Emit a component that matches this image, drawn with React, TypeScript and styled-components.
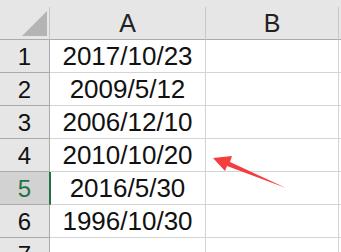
import React from 'react';
import styled, { createGlobalStyle } from 'styled-components';

const GlobalStyle = createGlobalStyle`
  html, body {
    margin: 0;
    padding: 0;
    background: #ffffff;
    overflow: hidden;
  }
  body {
    font-family: "Liberation Sans", Arial, sans-serif;
  }
`;

const Sheet = styled.div`
  position: relative;
  width: 341px;
  height: 252px;
  overflow: hidden;
  background: #ffffff;
`;

const TopStrip = styled.div`
  height: 7px;
  background: #e6e6e6;
`;

const Grid = styled.div`
  display: grid;
  grid-template-columns: 50px 156px 133px 2px;
  grid-auto-rows: 33px;
`;

const Corner = styled.div`
  position: relative;
  background: #e6e6e6;
  border-right: 1px solid #c8c8c8;
  border-bottom: 1px solid #ababab;
`;

const CornerTriangle = styled.div`
  position: absolute;
  right: 2px;
  bottom: 3px;
  width: 0;
  height: 0;
  border-left: 25px solid transparent;
  border-bottom: 25px solid #b4b4b4;
`;

const ColHeader = styled.div<{ last?: boolean }>`
  background: #e6e6e6;
  border-right: ${p => (p.last ? 'none' : '1px solid #c8c8c8')};
  border-bottom: 1px solid #ababab;
  display: flex;
  align-items: center;
  justify-content: center;
  font-size: 25px;
  color: #222222;
  padding-top: 1px;
  box-sizing: border-box;
`;

const RowHeader = styled.div<{ selected?: boolean }>`
  background: ${p => (p.selected ? '#d2d2d2' : '#e6e6e6')};
  border-right: ${p => (p.selected ? '2px solid #217346' : '1px solid #ababab')};
  border-bottom: 1px solid #ababab;
  margin-right: ${p => (p.selected ? '-1px' : '0')};
  display: flex;
  align-items: center;
  justify-content: center;
  font-size: 24px;
  color: ${p => (p.selected ? '#217346' : '#111111')};
  padding-top: 2px;
  box-sizing: border-box;
  position: relative;
  z-index: 1;
`;

const Cell = styled.div<{ last?: boolean }>`
  border-right: ${p => (p.last ? 'none' : '1px solid #d4d4d4')};
  border-bottom: 1px solid #d4d4d4;
  display: flex;
  align-items: center;
  justify-content: center;
  font-size: 26px;
  color: #111111;
  padding-top: 1px;
  box-sizing: border-box;
`;

const Arrow = styled.svg`
  position: absolute;
  left: 0;
  top: 0;
  pointer-events: none;
`;

const dates = ['2017/10/23', '2009/5/12', '2006/12/10', '2010/10/20', '2016/5/30', '1996/10/30', ''];

export default function App() {
  return (
    <Sheet>
      <GlobalStyle />
      <TopStrip />
      <Grid>
        <Corner>
          <CornerTriangle />
        </Corner>
        <ColHeader>A</ColHeader>
        <ColHeader>B</ColHeader>
        <ColHeader last />
        {dates.map((d, i) => (
          <React.Fragment key={i}>
            <RowHeader selected={i === 4}>{i + 1}</RowHeader>
            <Cell>{d}</Cell>
            <Cell />
            <Cell last />
          </React.Fragment>
        ))}
      </Grid>
      <Arrow width="341" height="252" viewBox="0 0 341 252">
        <polygon
          points="213,158 232,156 230,162 286,188 227,166 225,171"
          fill="#f53d3d"
        />
      </Arrow>
    </Sheet>
  );
}
